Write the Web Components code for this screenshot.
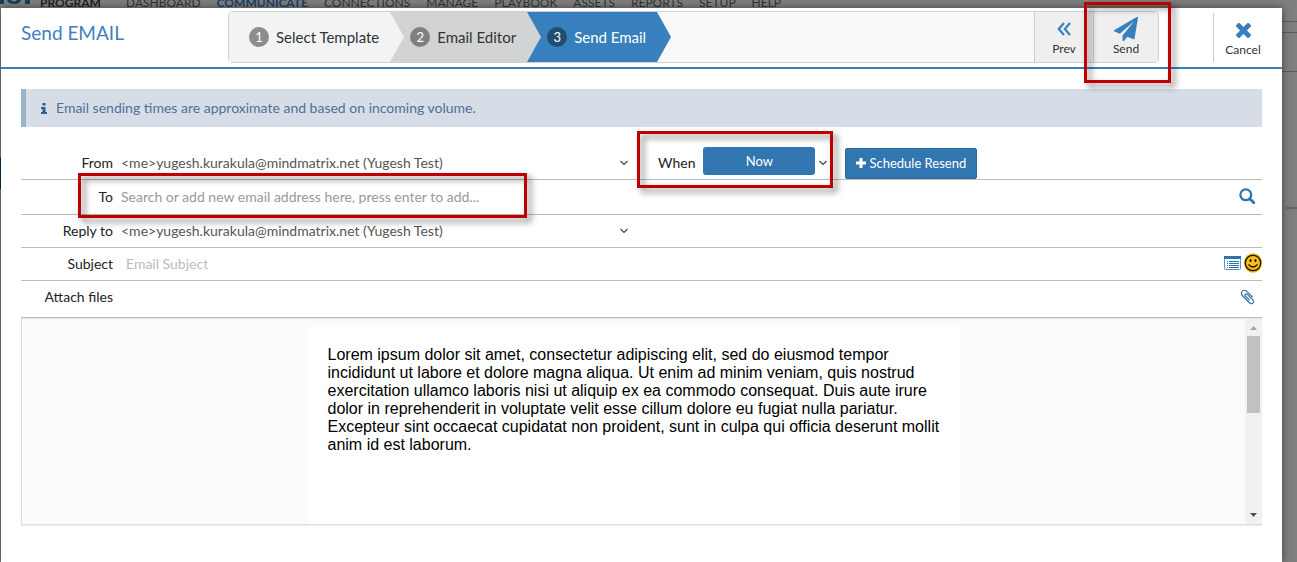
<!DOCTYPE html>
<html lang="en">
<head>
<meta charset="utf-8">
<title>Send EMAIL</title>
<style>
  body {
    margin: 0;
    min-height: 100vh;
    /* dimmed page behind the dialog: a few rules and the side menu */
    background:
      linear-gradient(#5d5d5d, #5d5d5d) right 21px / 15px 1px no-repeat,
      linear-gradient(#5d5d5d, #5d5d5d) right 32px / 15px 1px no-repeat,
      linear-gradient(#5d5d5d, #5d5d5d) right 71px / 15px 1px no-repeat,
      linear-gradient(#666, #666) right 207px / 11px 2px no-repeat,
      linear-gradient(#0f2f52, #0f2f52) left 157px / 1px 32px no-repeat,
      #7f7f7f;
    color: #333;
    font: 14px/20px Lato, "Liberation Sans", sans-serif;
    display: flex;
    flex-direction: column;
  }
  send-dialog { flex: 1; }
</style>
</head>
<body>
<site-nav></site-nav>
<send-dialog>
  <wizard-bar slot="wizard">
    <wizard-step number="1">Select Template</wizard-step>
    <wizard-step number="2" state="done">Email Editor</wizard-step>
    <wizard-step number="3" state="active">Send Email</wizard-step>
    <tool-button slot="actions" icon="prev">Prev</tool-button>
    <tool-button slot="actions" icon="send" marked>Send</tool-button>
  </wizard-bar>
  <tool-button slot="cancel" icon="cancel" plain>Cancel</tool-button>
  <info-note>Email sending times are approximate and based on incoming volume.</info-note>
  <email-form></email-form>
  <email-preview>Lorem ipsum dolor sit amet, consectetur adipiscing elit, sed do eiusmod tempor incididunt ut labore et dolore magna aliqua. Ut enim ad minim veniam, quis nostrud exercitation ullamco laboris nisi ut aliquip ex ea commodo consequat. Duis aute irure dolor in reprehenderit in voluptate velit esse cillum dolore eu fugiat nulla pariatur. Excepteur sint occaecat cupidatat non proident, sunt in culpa qui officia deserunt mollit anim id est laborum.</email-preview>
</send-dialog>

<script>
const ICONS = {
  prev: '<svg width="14" height="16" viewBox="0 0 14 16" fill="none" stroke="#3780bd" stroke-width="2.200"><path d="M7 2 1.800 8 7 14M13 2 7.800 8 13 14"/></svg>',
  send: '<svg width="24" height="24" viewBox="0 0 1792 1792" fill="#3780bd"><path d="M1764 11q33 24 27 64l-256 1536q-5 29-32 45-14 8-31 8-11 0-24-5l-453-185-242 295q-18 23-49 23-13 0-22-4-19-7-30.500-23.500t-11.500-36.500v-349l864-1059-1069 925-395-162q-37-14-40-55-2-40 32-59l1664-960q15-9 32-9 20 0 36 11z"/></svg>',
  cancel: '<svg width="15" height="15" viewBox="302 366 1188 1188" fill="#3780bd"><path d="M1490 1322q0 40-28 68l-136 136q-28 28-68 28t-68-28l-294-294-294 294q-28 28-68 28t-68-28l-136-136q-28-28-28-68t28-68l294-294-294-294q-28-28-28-68t28-68l136-136q28-28 68-28t68 28l294 294 294-294q28-28 68-28t68 28l136 136q28 28 28 68t-28 68l-294 294 294 294q28 28 28 68z"/></svg>',
  info: '<svg width="6" height="11" viewBox="0 0 6 11" fill="#2c5f93"><path d="M1.500 0h3v2.500h-3zM0 4h4.500v5H6v2H0V9h1.500V6H0z"/></svg>',
  chevron: '<svg width="8" height="6" viewBox="0 0 8 6" fill="none" stroke="#444" stroke-width="1.200"><path d="M.5 1 4 4.500 7.500 1"/></svg>',
  plus: '<svg width="10" height="10" viewBox="0 0 10 10" fill="#fff"><path d="M3.500 0h3v3.500H10v3H6.500V10h-3V6.500H0v-3h3.500z"/></svg>',
  search: '<svg width="16" height="16" viewBox="0 0 16 16" fill="none" stroke="#2f74b0"><circle cx="6.800" cy="6.800" r="5.400" stroke-width="2.300"/><path d="m10.800 10.800 4 4" stroke-width="2.800" stroke-linecap="round"/></svg>',
  list: '<svg width="17" height="14" viewBox="0 0 17 14"><rect x=".5" y=".5" width="16" height="13" rx="1" fill="#fff" stroke="#5b93c6"/><path fill="#2f74b0" d="M0 0h17v3H0zM3 5h1v1H3zM3 7h1v1H3zM3 9h1v1H3zM3 11h1v1H3zM5 5h10v1H5zM5 7h10v1H5zM5 9h10v1H5zM5 11h10v1H5z"/></svg>',
  smile: '<svg width="18" height="20" viewBox="0 0 18 20"><ellipse cx="9" cy="10" rx="9" ry="9.800" fill="#f5b400"/><circle cx="9" cy="10" r="7.700" fill="#fdbf0c" stroke="#111" stroke-width="1.300"/><ellipse cx="6.500" cy="7.500" rx="1" ry="1.500"/><ellipse cx="11.500" cy="7.500" rx="1" ry="1.500"/><path d="M4.500 11.500q4.500 5 9 0" fill="none" stroke="#111" stroke-width="1.300"/></svg>',
  clip: '<svg width="15" height="16" viewBox="128 64 1536 1664" fill="#2f74b0"><path d="M1596 1385q0 117-79 196t-196 79q-135 0-235-100l-777-776q-113-115-113-271 0-159 110-270t269-111q158 0 273 113l605 606q10 10 10 22 0 16-30.500 46.500t-46.500 30.500q-13 0-23-10l-606-607q-79-77-181-77-106 0-179 75t-73 181q0 105 76 181l776 777q63 63 145 63 64 0 106-42t42-106q0-82-63-145l-581-581q-26-24-60-24-29 0-48 19t-19 48q0 32 25 59l410 410q10 10 10 22 0 16-31 47t-47 31q-12 0-22-10l-410-410q-63-61-63-149 0-82 57-139t139-57q88 0 149 63l581 581q100 98 100 235z"/></svg>'
};

// hollow red frame laid over the control it points at
const MARK_CSS = `
  .mark {
    position: absolute;
    border: 3px solid #c00000;
    filter: drop-shadow(4px 4px 3px rgba(0, 0, 0, .5));
    pointer-events: none;
    z-index: 5;
  }
`;

class SiteNav extends HTMLElement {
  constructor() {
    super();
    this.attachShadow({ mode: 'open' });
    this.shadowRoot.innerHTML = `
      <style>
        :host { display: block; height: 8px; }
        nav { display: flex; align-items: center; height: 6px; font-size: 12px; line-height: 6px; }
        svg { width: 40px; height: 6px; }
        b { width: 58px; margin-right: 28px; border-bottom: 1px solid #4a6a80; color: #222; }
        ul { display: flex; gap: 16px; margin: 0; padding: 0; list-style: none; }
        a { color: #333; text-decoration: none; }
        a.on { color: #1d3f66; font-weight: bold; }
      </style>
      <nav>
        <svg viewBox="0 0 40 6" fill="#173f5c"><path d="M0 0h4v4H0zM7 0h4q3 3 6 0h4q-1 4-7 4T7 0zM25 0h5v4h-5z"/></svg>
        <b>PROGRAM</b>
        <ul>
          <li><a href="#">DASHBOARD</a></li>
          <li><a href="#" class="on">COMMUNICATE</a></li>
          <li><a href="#">CONNECTIONS</a></li>
          <li><a href="#">MANAGE</a></li>
          <li><a href="#">PLAYBOOK</a></li>
          <li><a href="#">ASSETS</a></li>
          <li><a href="#">REPORTS</a></li>
          <li><a href="#">SETUP</a></li>
          <li><a href="#">HELP</a></li>
        </ul>
      </nav>
    `;
  }
}

class SendDialog extends HTMLElement {
  constructor() {
    super();
    this.attachShadow({ mode: 'open' });
    this.shadowRoot.innerHTML = `
      <style>
        :host {
          display: block;
          position: relative;
          margin: 0 15px 0 1px;
          background: #fff;
          box-shadow: 0 0 8px rgba(0, 0, 0, .5);
        }
        header { display: flex; height: 59px; border-bottom: 2px solid #3780bd; }
        h1 { flex: none; width: 207px; margin: 0; padding: 13px 0 0 20px; font-size: 19px; line-height: 24px; font-weight: normal; color: #3f7fbf; }
        .wizard { flex: 1; padding-top: 3px; }
        .cancel { display: flex; margin: 5px 10px 5px 54px; border-left: 1px solid #ccc; }
        main { padding: 20px; }
      </style>
      <header>
        <h1>Send EMAIL</h1>
        <div class="wizard"><slot name="wizard"></slot></div>
        <div class="cancel"><slot name="cancel"></slot></div>
      </header>
      <main><slot></slot></main>
    `;
  }
}

class WizardBar extends HTMLElement {
  constructor() {
    super();
    this.attachShadow({ mode: 'open' });
    this.shadowRoot.innerHTML = `
      <style>
        :host { display: flex; height: 50px; border: 1px solid #d0d0d0; border-radius: 4px; background: #f9f9f9; }
        .steps { display: flex; flex: 1; }
        .actions { display: flex; }
      </style>
      <div class="steps"><slot></slot></div>
      <div class="actions"><slot name="actions"></slot></div>
    `;
  }
}

class WizardStep extends HTMLElement {
  constructor() {
    super();
    this.attachShadow({ mode: 'open' });
  }
  connectedCallback() {
    this.shadowRoot.innerHTML = `
      <style>
        :host { --bg: #f2f3f5; --badge: #8c8e8d; display: flex; position: relative; padding-left: 20px; }
        :host([state=done]) { --bg: #d2d3d4; --badge: #7f8081; }
        :host([state=active]) { --bg: #3780bd; --badge: #214d71; color: #fff; }
        :host { background: var(--bg); }
        :host::after {
          content: "";
          position: absolute;
          left: 100%;
          z-index: 1;
          border: solid transparent;
          border-width: 25px 0 25px 14px;
          border-left-color: var(--bg);
        }
        button { display: flex; align-items: center; gap: 7px; padding: 0 11px 0 0; border: 0; background: none; color: inherit; font: inherit; font-size: 15px; white-space: nowrap; }
        i { width: 20px; border-radius: 10px; background: var(--badge); color: #fff; font-style: normal; font-size: 13px; line-height: 20px; text-align: center; }
      </style>
      <button type="button"><i>${this.getAttribute('number')}</i><slot></slot></button>
    `;
  }
}

class ToolButton extends HTMLElement {
  constructor() {
    super();
    this.attachShadow({ mode: 'open' });
  }
  connectedCallback() {
    this.shadowRoot.innerHTML = `
      <style>
        ${MARK_CSS}
        :host { display: flex; position: relative; background: #efefef; border-left: 1px solid #ccc; }
        :host([plain]) { background: none; border: 0; }
        button { display: flex; flex-direction: column; align-items: center; min-width: 58px; padding: 4px 0 0; border: 0; background: none; color: #333; font: inherit; font-size: 12px; line-height: 14px; }
        :host([icon=send]) button { min-width: 64px; }
        .icon { display: flex; align-items: center; height: 26px; }
        .mark { inset: -10px -13px -21px -10px; }
      </style>
      <button type="button"><span class="icon">${ICONS[this.getAttribute('icon')]}</span><slot></slot></button>
      ${this.hasAttribute('marked') ? '<span class="mark"></span>' : ''}
    `;
  }
}

class InfoNote extends HTMLElement {
  constructor() {
    super();
    this.attachShadow({ mode: 'open' });
    this.shadowRoot.innerHTML = `
      <style>
        :host { display: flex; align-items: center; gap: 9px; height: 38px; padding-left: 15px; border-left: 5px solid #9cb3c7; background: #d6dde7; color: #4f7097; }
      </style>
      ${ICONS.info}<span><slot></slot></span>
    `;
  }
}

class FormRow extends HTMLElement {
  constructor() {
    super();
    this.attachShadow({ mode: 'open' });
    this.shadowRoot.innerHTML = `
      <style>
        :host { display: flex; position: relative; align-items: center; gap: 8px; height: 32px; border-bottom: 1px solid #bbb; }
      </style>
      <slot></slot>
    `;
  }
}

class EmailForm extends HTMLElement {
  constructor() {
    super();
    this.attachShadow({ mode: 'open' });
    this.shadowRoot.innerHTML = `
      <style>
        ${MARK_CSS}
        :host { display: block; padding-top: 20px; }
        label { color: #222; }
        .name { flex: none; width: 92px; text-align: right; }
        .pick { display: flex; flex: 0 1 507px; align-items: center; }
        select, input { flex: 1; min-width: 0; margin: 0; padding: 0; border: 0; outline: 0; background: none; color: #555; font: inherit; appearance: none; }
        input::placeholder { color: #999; opacity: 1; }
        .pale::placeholder { color: #bbb; }
        .pale { padding-left: 5px; }
        .when { display: flex; position: relative; align-items: center; gap: 8px; margin-left: 22px; }
        .when select { flex: none; width: 112px; height: 28px; margin-bottom: 4px; border-radius: 3px; background: #3276b1; color: #fff; font-size: 13px; text-align: center; text-align-last: center; }
        .when svg { margin-left: -4px; }
        .when .mark { inset: -16px -6px -9px -21px; }
        .to { height: 34px; }
        .to .mark { inset: -7px auto -4px 57px; width: 443px; }
        .resend { display: flex; align-items: center; gap: 3px; height: 31px; margin-left: 10px; padding: 0 10px; border: 1px solid #2c699d; border-radius: 2px; background: #3276b1; color: #fff; font: inherit; font-size: 13px; }
        .icon { display: flex; padding: 0; border: 0; background: none; }
        .end { display: flex; align-items: center; gap: 3px; margin-left: auto; padding-bottom: 3px; }
        .inset { margin-right: 7px; }
        .files { box-sizing: border-box; height: 37px; padding-bottom: 4px; }
        .files .end { padding: 0; }
      </style>
      <form-row>
        <label class="name" for="from">From</label>
        <span class="pick"><select id="from"><option>&lt;me&gt;yugesh.kurakula@mindmatrix.net (Yugesh Test)</option></select>${ICONS.chevron}</span>
        <span class="when">
          <label for="when">When</label>
          <select id="when"><option>Now</option></select>${ICONS.chevron}
          <span class="mark"></span>
        </span>
        <button type="button" class="resend">${ICONS.plus}Schedule Resend</button>
      </form-row>
      <form-row class="to">
        <label class="name" for="to">To</label>
        <input id="to" placeholder="Search or add new email address here, press enter to add...">
        <span class="end inset"><button type="button" class="icon" aria-label="Search">${ICONS.search}</button></span>
        <span class="mark"></span>
      </form-row>
      <form-row>
        <label class="name" for="reply">Reply to</label>
        <span class="pick"><select id="reply"><option>&lt;me&gt;yugesh.kurakula@mindmatrix.net (Yugesh Test)</option></select>${ICONS.chevron}</span>
      </form-row>
      <form-row>
        <label class="name" for="subject">Subject</label>
        <input id="subject" class="pale" placeholder="Email Subject">
        <span class="end">
          <button type="button" class="icon" aria-label="Insert field">${ICONS.list}</button>
          <button type="button" class="icon" aria-label="Insert emoji">${ICONS.smile}</button>
        </span>
      </form-row>
      <form-row class="files">
        <label class="name" for="attach">Attach files</label>
        <span class="end inset"><button type="button" id="attach" class="icon">${ICONS.clip}</button></span>
      </form-row>
    `;
  }
}

class EmailPreview extends HTMLElement {
  constructor() {
    super();
    this.attachShadow({ mode: 'open' });
    this.shadowRoot.innerHTML = `
      <style>
        :host { display: flex; height: 205px; border: 1px solid #ddd; border-top-color: #e8e8e8; border-right: 0; background: #fbfbfb; box-shadow: 0 1px 1px #eee; }
        .view { flex: 1; padding-top: 7px; }
        article { box-sizing: border-box; max-width: 652px; height: 100%; margin: 0 auto; padding: 20px; background: #fff; color: #000; font: 16px/18px "Liberation Sans", Arial, sans-serif; }
        p { margin: 0; }
        .view { box-sizing: border-box; }
        .bar { display: flex; flex-direction: column; align-items: center; width: 17px; background: #f1f1f1; }
        .bar svg { flex: none; }
        .track { flex: 1; width: 13px; }
        .thumb { height: 77px; background: #c1c1c1; }
      </style>
      <div class="view"><article><p><slot></slot></p></article></div>
      <div class="bar">
        <svg width="17" height="17" viewBox="0 0 17 17"><path d="M5 11h7L8.500 7z" fill="#a3a3a3"/></svg>
        <div class="track"><div class="thumb"></div></div>
        <svg width="17" height="17" viewBox="0 0 17 17"><path d="M5 6h7L8.500 10z" fill="#505050"/></svg>
      </div>
    `;
  }
}

customElements.define('site-nav', SiteNav);
customElements.define('send-dialog', SendDialog);
customElements.define('wizard-bar', WizardBar);
customElements.define('wizard-step', WizardStep);
customElements.define('tool-button', ToolButton);
customElements.define('info-note', InfoNote);
customElements.define('form-row', FormRow);
customElements.define('email-form', EmailForm);
customElements.define('email-preview', EmailPreview);
</script>
</body>
</html>
